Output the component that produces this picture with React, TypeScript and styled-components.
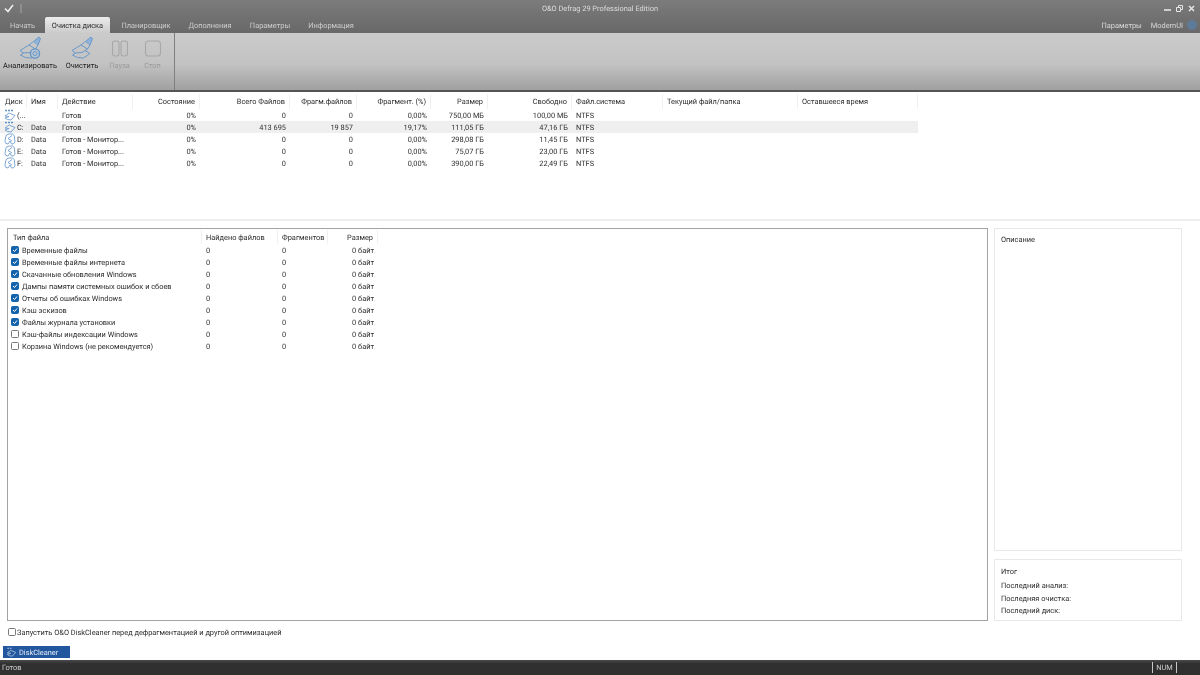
import React from "react";
import styled, { createGlobalStyle } from "styled-components";

const GlobalStyle = createGlobalStyle`
  html, body { margin: 0; padding: 0; height: 100%; background: #fff; overflow: hidden; }
  #root { height: 100%; }
  * { box-sizing: border-box; }
`;

const DRIVE_COLS = "27px 31px 75px 67px 90px 67px 74px 57px 84px 91px 135px 120px";
const FILE_COLS = "191px 76px 50px 50px";

const Window = styled.div`
  width: 1200px;
  height: 675px;
  display: flex;
  flex-direction: column;
  font-family: Roboto, "Open Sans", sans-serif;
  font-size: 7.4px;
  text-rendering: geometricPrecision;
  color: #2e2e2e;
  background: #fff;
  filter: blur(0.3px);
`;

const TitleBar = styled.div`
  height: 17px;
  display: grid;
  grid-template-columns: 1fr auto 1fr;
  align-items: center;
  padding: 0 4px;
  background: linear-gradient(#7c7c7c, #717171);
  color: #dcdcdc;
`;

const QuickAccess = styled.div`
  display: flex;
  align-items: center;
  gap: 6px;
`;

const QuickDivider = styled.span`
  width: 2px;
  height: 9px;
  background: #8d8d8d;
`;

const WindowButtons = styled.div`
  display: flex;
  justify-content: flex-end;
  align-items: center;
  gap: 5px;
  padding-right: 1px;
`;

const TabStrip = styled.div`
  height: 16px;
  display: flex;
  align-items: flex-end;
  padding: 0 3px 0 0;
  background: linear-gradient(#717171, #696969);
`;

const Tab = styled.div<{ $active?: boolean; $w: number }>`
  width: ${(p) => p.$w}px;
  height: 16px;
  display: flex;
  align-items: center;
  justify-content: center;
  white-space: nowrap;
  color: ${(p) => (p.$active ? "#2e2e2e" : "#cccccc")};
  background: ${(p) => (p.$active ? "linear-gradient(#ececec, #cbcbcb)" : "transparent")};
  border-radius: 2px 2px 0 0;
`;

const TabRight = styled.div`
  margin-left: auto;
  display: flex;
  align-items: center;
  height: 16px;
  gap: 9px;
  color: #d8d8d8;
`;

const Avatar = styled.span`
  width: 10px;
  height: 10px;
  margin-left: -5px;
  border-radius: 50%;
  background: #5d7b99;
`;

const Ribbon = styled.div`
  height: 59px;
  display: flex;
  background: linear-gradient(#cbcbcb, #c2c2c2 55%, #a0a0a0);
  border-bottom: 2px solid #555;
`;

const RibbonGroup = styled.div`
  width: 175px;
  height: 57px;
  display: flex;
  align-items: flex-start;
  padding-top: 2px;
  border-right: 1px solid #7f7f7f;
`;

const RibbonButton = styled.div<{ $w: number; $off?: boolean }>`
  width: ${(p) => p.$w}px;
  display: flex;
  flex-direction: column;
  align-items: center;
  gap: 2px;
  white-space: nowrap;
  color: ${(p) => (p.$off ? "#999999" : "#222")};
`;

const DriveList = styled.div`
  flex: 0 0 129px;
  padding-top: 2px;
  border-bottom: 2px solid #efefef;
`;

const DriveHeader = styled.div`
  display: grid;
  grid-template-columns: ${DRIVE_COLS};
  width: 918px;
  height: 15px;
  align-items: center;
`;

const DriveRow = styled.div<{ $selected?: boolean }>`
  display: grid;
  grid-template-columns: ${DRIVE_COLS};
  width: 918px;
  height: 12px;
  align-items: center;
  background: ${(p) => (p.$selected ? "#efefef" : "transparent")};
`;

const Cell = styled.div<{ $right?: boolean; $sep?: boolean }>`
  height: 100%;
  display: flex;
  align-items: center;
  justify-content: ${(p) => (p.$right ? "flex-end" : "flex-start")};
  padding: ${(p) => (p.$right ? "0 4px 0 0" : "0 0 0 4px")};
  white-space: nowrap;
  overflow: hidden;
  border-right: ${(p) => (p.$sep ? "1px solid #f0f0f0" : "none")};
`;

const FirstDriveHead = styled(Cell)`
  padding-left: 5px;
`;

const DiskCell = styled(Cell)`
  gap: 1px;
`;

const FirstFileHead = styled(Cell)`
  padding-left: 2px;
`;

const Content = styled.div`
  display: grid;
  grid-template-columns: 981px 188px;
  column-gap: 6px;
  padding: 7px 0 0 7px;
  flex: 0 0 400px;
`;

const FilePanel = styled.div`
  height: 393px;
  border: 1px solid #a3a3a3;
  padding: 1px 0 0 3px;
`;

const FileHeader = styled.div`
  display: grid;
  grid-template-columns: ${FILE_COLS};
  height: 14px;
  align-items: center;
`;

const FileRow = styled.div`
  display: grid;
  grid-template-columns: ${FILE_COLS};
  height: 12px;
  align-items: center;
`;

const FileName = styled.div`
  display: flex;
  align-items: center;
  gap: 3px;
  white-space: nowrap;
`;

const Box = styled.span<{ $on?: boolean }>`
  flex: none;
  width: 8px;
  height: 8px;
  border-radius: 1.5px;
  display: inline-flex;
  align-items: center;
  justify-content: center;
  background: ${(p) => (p.$on ? "#1463ad" : "#fff")};
  border: 1px solid ${(p) => (p.$on ? "#1463ad" : "#777")};
`;

const SideColumn = styled.div`
  display: flex;
  flex-direction: column;
  gap: 8px;
  height: 393px;
`;

const SidePanel = styled.div<{ $h: number; $top: number }>`
  height: ${(p) => p.$h}px;
  border: 1px solid #e8e8e8;
  padding: ${(p) => p.$top}px 6px 0;
  display: flex;
  flex-direction: column;
`;

const SideTitle = styled.div<{ $gap: number }>`
  height: 12px;
  line-height: 12px;
  margin-bottom: ${(p) => p.$gap}px;
`;

const SideLine = styled.div`
  height: 12.5px;
  line-height: 12px;
`;

const StartOption = styled.div`
  display: flex;
  align-items: center;
  gap: 1px;
  padding-left: 8px;
  height: 12px;
  margin-top: 5px;
`;

const CleanerRow = styled.div`
  padding: 8px 0 0 3px;
  height: 22px;
`;

const CleanerTab = styled.div`
  width: 67px;
  height: 12px;
  display: flex;
  align-items: center;
  gap: 2px;
  padding-left: 3px;
  color: #e4ecf6;
  background: #22569f;
`;

const StatusBar = styled.div`
  flex: 1;
  display: flex;
  align-items: center;
  justify-content: space-between;
  padding-left: 2px;
  color: #cfcfcf;
  background: linear-gradient(#4a4a4a, #303030 25%, #2f2f2f);
`;

const NumBox = styled.div`
  width: 25px;
  margin-right: 23px;
  height: 11px;
  line-height: 11px;
  text-align: center;
  border-left: 1px solid #c8c8c8;
  border-right: 1px solid #c8c8c8;
`;

const Brush = ({ analyze }: { analyze?: boolean }) => (
  <svg width="24" height="24" viewBox="0 0 24 24" fill="none" stroke="#5f93c9" strokeWidth="0.9">
    <path d="M2 15.5 L11 10 Q14 12 17.5 14 L12 17.5 L5.5 18 Z" />
    <path d="M5.5 18 L2.5 20 Q7 23.5 13.5 23 L20 18.5 L15 15.5" />
    <path d="M11 10 L15.5 6.5 L20 10 L17.5 14" />
    <path d="M15.5 6.5 L21 2 L22.5 3.5 L20 10" fill="#8fb3d9" />
    {analyze && <circle cx="17" cy="18.5" r="4.6" fill="#b9c5d1" strokeWidth="1.3" />}
    {analyze && <circle cx="17" cy="18.5" r="2" />}
  </svg>
);

const DiskIcon = ({ ssd }: { ssd?: boolean }) => (
  <svg width="12" height="12" viewBox="0 0 12 12" fill="none" stroke="#5f93c9" strokeWidth="0.8">
    {ssd ? (
      <>
        <path d="M1 1.5h2M4 1.5h2M7 1.5h2" strokeWidth="1.4" />
        <path d="M1 7 L5 4 L11 6.5 L7 11 Q3 11 1 9 L5 7.5 Z" />
      </>
    ) : (
      <>
        <path d="M1.5 5 Q1.5 1 5 1 L8.5 1 Q11 2 10.5 5 L11 9 Q10 11.5 7.5 11 L6 8 L4 11 Q1 11 1 8.5 Z" />
        <path d="M4 5.5 L8 2.5 M4 5.5 L8 8" />
      </>
    )}
  </svg>
);

const Check = () => (
  <svg width="6" height="6" viewBox="0 0 6 6" fill="none" stroke="#fff" strokeWidth="1">
    <path d="M1 3 L2.5 4.5 L5 1.5" />
  </svg>
);

const driveHeads = [
  ["Имя", false], ["Действие", false], ["Состояние", true],
  ["Всего Файлов", true], ["Фрагм.файлов", true], ["Фрагмент. (%)", true], ["Размер", true],
  ["Свободно", true], ["Файл.система", false], ["Текущий файл/папка", false], ["Оставшееся время", false],
] as const;

const drives = [
  { d: "(...", name: "", act: "Готов", total: "0", fr: "0", pct: "0,00%", size: "750,00 МБ", free: "100,00 МБ", ssd: true },
  { d: "C:", name: "Data", act: "Готов", total: "413 695", fr: "19 857", pct: "19,17%", size: "111,05 ГБ", free: "47,16 ГБ", ssd: true, sel: true },
  { d: "D:", name: "Data", act: "Готов - Монитор...", total: "0", fr: "0", pct: "0,00%", size: "298,08 ГБ", free: "11,45 ГБ" },
  { d: "E:", name: "Data", act: "Готов - Монитор...", total: "0", fr: "0", pct: "0,00%", size: "75,07 ГБ", free: "23,00 ГБ" },
  { d: "F:", name: "Data", act: "Готов - Монитор...", total: "0", fr: "0", pct: "0,00%", size: "390,00 ГБ", free: "22,49 ГБ" },
];

const fileTypes = [
  ["Временные файлы", true],
  ["Временные файлы интернета", true],
  ["Скачанные обновления Windows", true],
  ["Дампы памяти системных ошибок и сбоев", true],
  ["Отчеты об ошибках Windows", true],
  ["Кэш эскизов", true],
  ["Файлы журнала установки", true],
  ["Кэш-файлы индексации Windows", false],
  ["Корзина Windows (не рекомендуется)", false],
] as const;

const tabs = [
  ["Начать", 45],
  ["Очистка диска", 65],
  ["Планировщик", 72],
  ["Дополнения", 56],
  ["Параметры", 64],
  ["Информация", 58],
] as const;

export default function App() {
  return (
    <Window>
      <GlobalStyle />
      <TitleBar>
        <QuickAccess>
          <svg width="10" height="9" viewBox="0 0 10 9" fill="none" stroke="#eee" strokeWidth="1.6">
            <path d="M1 4.5 L4 7.5 L9 1" />
          </svg>
          <QuickDivider />
        </QuickAccess>
        <span>O&amp;O Defrag 29 Professional Edition</span>
        <WindowButtons>
          <svg width="7" height="7" viewBox="0 0 7 7" stroke="#e6e6e6" fill="none" strokeWidth="1.6"><path d="M0 5h7" /></svg>
          <svg width="7" height="7" viewBox="0 0 7 7" stroke="#e6e6e6" fill="none" strokeWidth="1"><path d="M0.5 2.5h4v4h-4zM2.5 2.5v-2h4v4h-2" /></svg>
          <svg width="7" height="7" viewBox="0 0 7 7" stroke="#e6e6e6" fill="none" strokeWidth="1.5"><path d="M1 1l5 5M6 1l-5 5" /></svg>
        </WindowButtons>
      </TitleBar>
      <TabStrip>
        {tabs.map(([t, w], i) => (
          <Tab key={t} $w={w} $active={i === 1}>{t}</Tab>
        ))}
        <TabRight>
          <span>Параметры</span>
          <span>ModernUI</span>
          <Avatar />
        </TabRight>
      </TabStrip>
      <Ribbon>
        <RibbonGroup>
          <RibbonButton $w={60}>
            <Brush analyze />
            <span>Анализировать</span>
          </RibbonButton>
          <RibbonButton $w={44}>
            <Brush />
            <span>Очистить</span>
          </RibbonButton>
          <RibbonButton $w={31} $off>
            <svg width="24" height="24" viewBox="0 0 24 24" fill="none" stroke="#a8a8a8" strokeWidth="1.1">
              <rect x="4.5" y="6" width="6.5" height="15" rx="2.5" />
              <rect x="13" y="6" width="6.5" height="15" rx="2.5" />
            </svg>
            <span>Пауза</span>
          </RibbonButton>
          <RibbonButton $w={35} $off>
            <svg width="24" height="24" viewBox="0 0 24 24" fill="none" stroke="#a8a8a8" strokeWidth="1.1">
              <rect x="4.5" y="6" width="15" height="15" rx="3" />
            </svg>
            <span>Стоп</span>
          </RibbonButton>
        </RibbonGroup>
      </Ribbon>
      <DriveList>
        <DriveHeader>
          <FirstDriveHead $sep>Диск</FirstDriveHead>
          {driveHeads.map(([h, right]) => (
            <Cell key={h} $right={right} $sep>{h}</Cell>
          ))}
        </DriveHeader>
        {drives.map((r) => (
          <DriveRow key={r.d} $selected={r.sel}>
            <DiskCell><DiskIcon ssd={r.ssd} />{r.d}</DiskCell>
            <Cell>{r.name}</Cell>
            <Cell>{r.act}</Cell>
            <Cell $right>0%</Cell>
            <Cell $right>{r.total}</Cell>
            <Cell $right>{r.fr}</Cell>
            <Cell $right>{r.pct}</Cell>
            <Cell $right>{r.size}</Cell>
            <Cell $right>{r.free}</Cell>
            <Cell>NTFS</Cell>
            <Cell />
            <Cell />
          </DriveRow>
        ))}
      </DriveList>
      <Content>
        <FilePanel>
          <FileHeader>
            <FirstFileHead $sep>Тип файла</FirstFileHead>
            <Cell $sep>Найдено файлов</Cell>
            <Cell $sep>Фрагментов</Cell>
            <Cell $right $sep>Размер</Cell>
          </FileHeader>
          {fileTypes.map(([name, on]) => (
            <FileRow key={name}>
              <FileName>
                <Box $on={on}>{on && <Check />}</Box>
                {name}
              </FileName>
              <Cell>0</Cell>
              <Cell>0</Cell>
              <Cell $right>0 байт</Cell>
            </FileRow>
          ))}
        </FilePanel>
        <SideColumn>
          <SidePanel $h={323} $top={5}>
            <SideTitle $gap={0}>Описание</SideTitle>
          </SidePanel>
          <SidePanel $h={62} $top={6}>
            <SideTitle $gap={2}>Итог</SideTitle>
            <SideLine>Последний анализ:</SideLine>
            <SideLine>Последняя очистка:</SideLine>
            <SideLine>Последний диск:</SideLine>
          </SidePanel>
        </SideColumn>
      </Content>
      <StartOption>
        <Box />
        Запустить O&amp;O DiskCleaner перед дефрагментацией и другой оптимизацией
      </StartOption>
      <CleanerRow>
        <CleanerTab>
          <svg width="11" height="10" viewBox="0 0 12 12" fill="none" stroke="#b9cde6" strokeWidth="0.9">
            <path d="M1 1.5h2M4 1.5h2" strokeWidth="1.4" />
            <path d="M1 7 L5 4 L11 6.5 L7 11 Q3 11 1 9 L5 7.5 Z" />
          </svg>
          DiskCleaner
        </CleanerTab>
      </CleanerRow>
      <StatusBar>
        <span>Готов</span>
        <NumBox>NUM</NumBox>
      </StatusBar>
    </Window>
  );
}
